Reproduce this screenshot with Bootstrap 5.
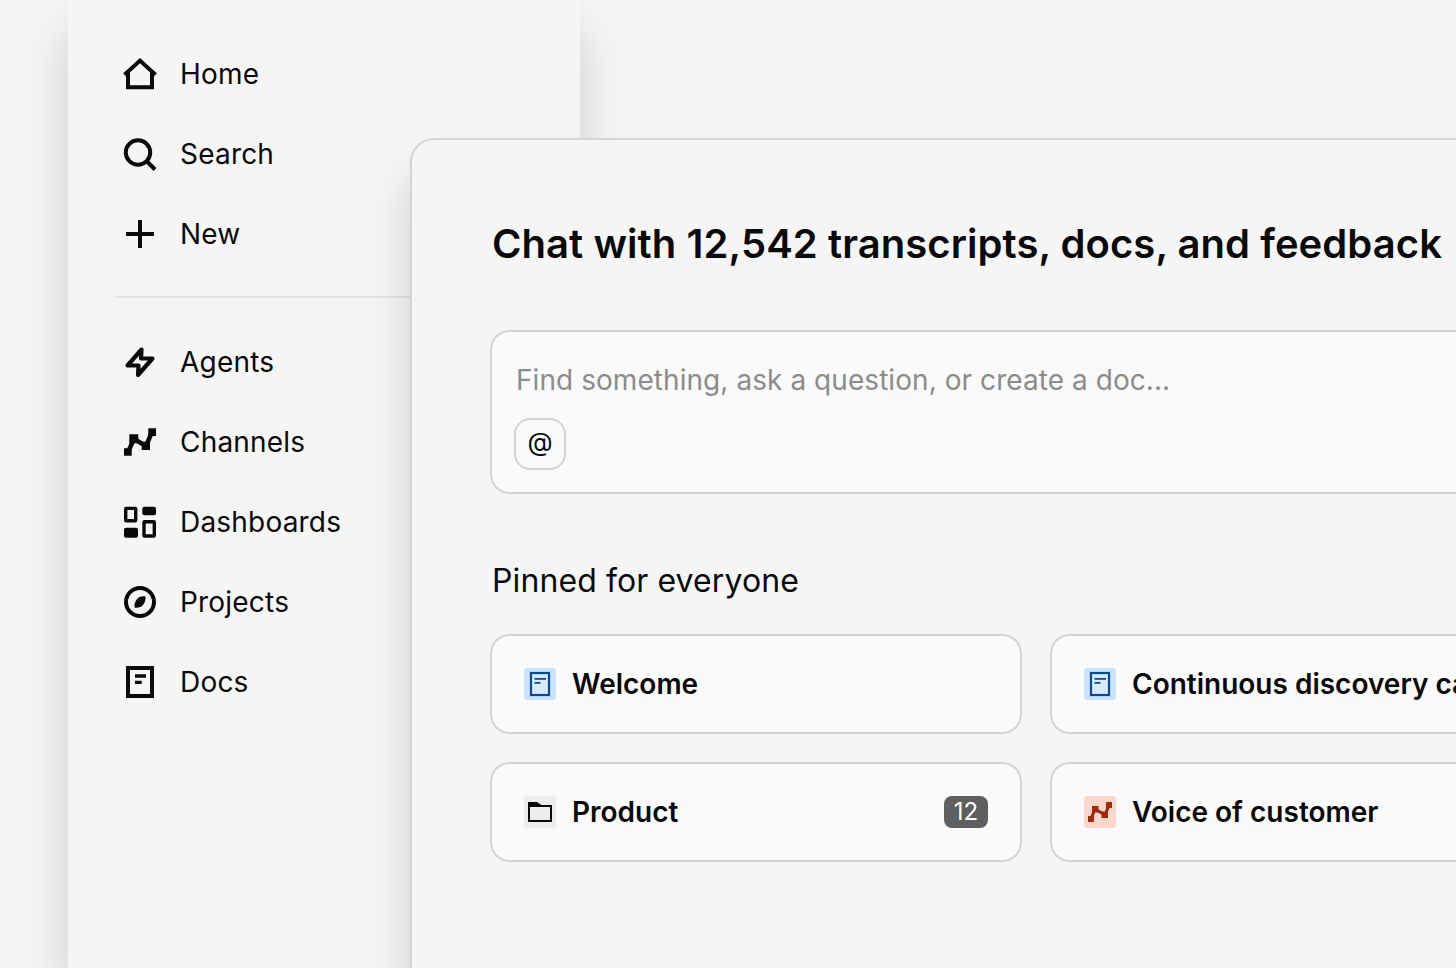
<!DOCTYPE html>
<html lang="en">
<head>
  <meta charset="UTF-8" />
  <meta name="viewport" content="width=device-width, initial-scale=1" />
  <title>Chat workspace</title>
  <link href="https://cdn.jsdelivr.net/npm/bootstrap@5.3.0/dist/css/bootstrap.min.css" rel="stylesheet">
  <style>
    body {
      background: #f5f5f5;
      height: 968px;
      overflow: hidden;
      font-family: Inter, "Liberation Sans", sans-serif;
      color: #0a0a0a;
    }

    .side-panel {
      width: 512px;
      height: 968px;
      margin-left: 68px;
      padding: 34px 48px;
      background: #f5f5f5;
      box-shadow: 0 30px 44px rgba(0, 0, 0, 0.16);
    }

    .side-link {
      height: 80px;
      gap: 20px;
      padding: 0 4px;
      font-size: 28px;
      letter-spacing: 0.2px;
      color: #0a0a0a;
    }

    .side-link svg {
      width: 40px;
      height: 40px;
      flex: none;
    }

    .side-rule {
      margin: 22px 0 24px;
      border-top: 2px solid #e2e2e2;
      opacity: 1;
    }

    .main-window {
      position: absolute;
      left: 410px;
      top: 138px;
      width: 1200px;
      height: 900px;
      padding: 76px 78px;
      background: #f5f5f5;
      border: 2px solid #d4d4d4;
      border-radius: 24px 0 0 0;
      box-shadow: 0 36px 44px rgba(0, 0, 0, 0.16);
    }

    .main-title {
      margin: 0 0 0 2px;
      height: 56px;
      line-height: 56px;
      font-size: 40px;
      letter-spacing: 0.06px;
      font-weight: 600;
      white-space: nowrap;
    }

    .ask-box {
      height: 164px;
      margin-top: 58px;
      padding: 30px 22px 22px;
      background: #fafafa;
      border: 2px solid #d4d4d4;
      border-radius: 20px;
    }

    .ask-hint {
      height: 36px;
      line-height: 36px;
      margin-left: 2px;
      font-size: 28px;
      letter-spacing: 0.06px;
      color: #8c8c8c;
    }

    .at-btn {
      width: 52px;
      height: 52px;
      margin-top: 20px;
      padding: 0 0 5px;
      background: #fafafa;
      border: 2px solid #d4d4d4;
      border-radius: 16px;
      font-size: 26px;
      line-height: 1;
      color: #0a0a0a;
    }

    .pinned-title {
      margin: 67px 0 0 2px;
      height: 40px;
      line-height: 40px;
      font-size: 32px;
      letter-spacing: 0.1px;
      font-weight: 400;
    }

    .pin-grid {
      grid-template-columns: 532px 532px;
      gap: 28px;
      margin-top: 33px;
    }

    .pin-card {
      height: 100px;
      padding: 0 32px;
      background: #fafafa;
      border: 2px solid #d4d4d4;
      border-radius: 20px;
      flex-direction: row;
      align-items: center;
      gap: 16px;
      font-size: 28px;
      font-weight: 600;
      white-space: nowrap;
    }

    .pin-tile {
      width: 32px;
      height: 32px;
      flex: none;
      border-radius: 4px;
    }

    .tile-blue { background: #c9e2fd; }
    .tile-grey { background: #ececec; }
    .tile-red { background: #fcd6cb; }

    .pin-count {
      margin-left: auto;
      width: 44px;
      height: 32px;
      line-height: 32px;
      text-align: center;
      background: #5f5f5f;
      border-radius: 8px;
      color: #fff;
      font-size: 24px;
      font-weight: 400;
    }
  </style>
</head>
<body>

<aside class="side-panel">
  <nav class="nav flex-column">
    <a class="nav-link side-link d-flex align-items-center" href="#">
      <svg viewBox="0 0 40 40" fill="none" stroke="#0a0a0a" stroke-width="4"><path d="M8 33.300V17.600L20 6.600l12 11v15.700zM4.500 20.800l3.500-3.200M35.500 20.800l-3.500-3.200"/></svg>
      Home
    </a>
    <a class="nav-link side-link d-flex align-items-center" href="#">
      <svg viewBox="0 0 40 40" fill="none" stroke="#0a0a0a" stroke-width="4"><circle cx="18" cy="18.500" r="12.200"/><path d="M27 27.500l8 8"/></svg>
      Search
    </a>
    <a class="nav-link side-link d-flex align-items-center" href="#">
      <svg viewBox="0 0 40 40" fill="none" stroke="#0a0a0a" stroke-width="4"><path d="M6 20h28M20 6v28"/></svg>
      New
    </a>
    <hr class="side-rule">
    <a class="nav-link side-link d-flex align-items-center" href="#">
      <svg viewBox="0 0 40 40" fill="none" stroke="#0a0a0a" stroke-width="4.200" stroke-linejoin="round"><path d="M21.500 7.500L7.500 23.500h11L18 33 32.500 16.500H21z"/></svg>
      Agents
    </a>
    <a class="nav-link side-link d-flex align-items-center" href="#">
      <svg viewBox="0 0 40 40" fill="#0a0a0a"><path d="M4 26.300h7.700v7.400H4zM9.300 12.300h9v9h-9zM21.700 19.700H30V28h-8.300zM28.300 6.300H36V14h-7.700z"/><path d="M8 30l6-13 12 7 6-14" fill="none" stroke="#0a0a0a" stroke-width="4.500"/></svg>
      Channels
    </a>
    <a class="nav-link side-link d-flex align-items-center" href="#">
      <svg viewBox="0 0 40 40"><rect x="5.700" y="6.400" width="10" height="12.400" rx=".5" fill="none" stroke="#0a0a0a" stroke-width="3.400"/><rect x="22.300" y="4.700" width="13.700" height="8.500" rx="2" fill="#0a0a0a"/><rect x="4" y="25.700" width="14" height="10" rx="2" fill="#0a0a0a"/><rect x="24" y="19.700" width="10.300" height="14.300" rx=".5" fill="none" stroke="#0a0a0a" stroke-width="3.400"/></svg>
      Dashboards
    </a>
    <a class="nav-link side-link d-flex align-items-center" href="#">
      <svg viewBox="0 0 40 40"><circle cx="20" cy="20" r="14" fill="none" stroke="#0a0a0a" stroke-width="4"/><path d="M25.500 14.500c.3 3-.5 6-2.500 8.500s-5.500 3-8.500 2.500c-.3-3 .5-6 2.500-8.500s5.500-3 8.500-2.500z" fill="#0a0a0a"/></svg>
      Projects
    </a>
    <a class="nav-link side-link d-flex align-items-center" href="#">
      <svg viewBox="0 0 40 40"><rect x="8" y="6" width="24" height="28" fill="none" stroke="#0a0a0a" stroke-width="4"/><path d="M15 12.300h11v3.400H15zM15 18.700h6.700v3.300H15z" fill="#0a0a0a"/></svg>
      Docs
    </a>
  </nav>
</aside>

<main class="main-window">
  <h1 class="main-title">Chat with 12,542 transcripts, docs, and feedback</h1>

  <div class="ask-box">
    <div class="ask-hint">Find something, ask a question, or create a doc...</div>
    <button class="btn at-btn" type="button">@</button>
  </div>

  <h2 class="pinned-title">Pinned for everyone</h2>

  <div class="d-grid pin-grid">
    <div class="card pin-card">
      <svg class="pin-tile tile-blue" viewBox="0 0 32 32"><rect x="7" y="5" width="18" height="22" fill="#d9eafd" stroke="#0b4a8f" stroke-width="2.200"/><path d="M10.500 10h11.500v1.800H10.500zM10.500 14h6v1.800h-6z" fill="#0b4a8f"/></svg>
      Welcome
    </div>
    <div class="card pin-card">
      <svg class="pin-tile tile-blue" viewBox="0 0 32 32"><rect x="7" y="5" width="18" height="22" fill="#d9eafd" stroke="#0b4a8f" stroke-width="2.200"/><path d="M10.500 10h11.500v1.800H10.500zM10.500 14h6v1.800h-6z" fill="#0b4a8f"/></svg>
      Continuous discovery calls
    </div>
    <div class="card pin-card">
      <svg class="pin-tile tile-grey" viewBox="0 0 32 32"><rect x="5" y="10" width="22" height="15" fill="none" stroke="#0a0a0a" stroke-width="2"/><path d="M4 6h9l6 4v1H4z" fill="#0a0a0a"/></svg>
      Product
      <span class="pin-count">12</span>
    </div>
    <div class="card pin-card">
      <svg class="pin-tile tile-red" viewBox="0 0 32 32" fill="#9c2a0f"><path d="M4 20h6v6H4zM8 10h6.500v6.500H8zM17.500 15.500H24V22h-6.500zM22 6h6v6h-6z"/><path d="M7 23l4-10 10 6 4-10" fill="none" stroke="#9c2a0f" stroke-width="3.200"/></svg>
      Voice of customer
    </div>
  </div>
</main>

<script src="https://cdn.jsdelivr.net/npm/bootstrap@5.3.0/dist/js/bootstrap.bundle.min.js"></script>
</body>
</html>
